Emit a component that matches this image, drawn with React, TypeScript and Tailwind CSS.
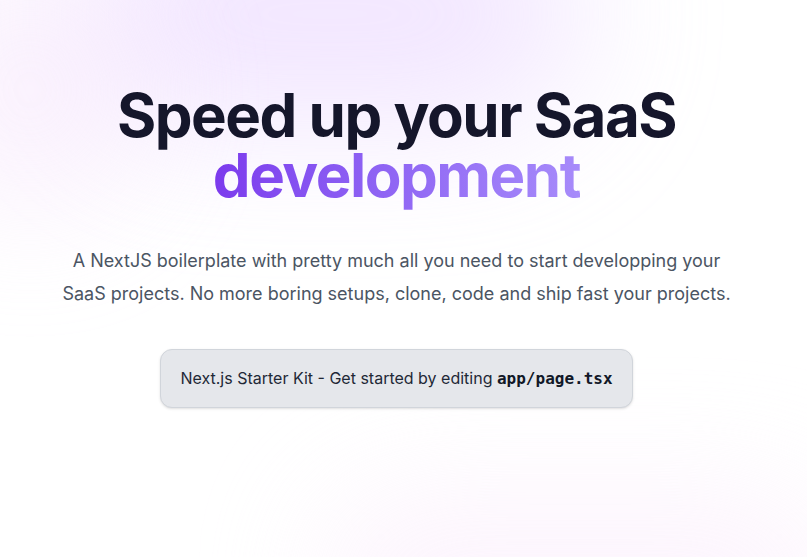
export default function App() {
  return (
    <div className="relative min-h-[557px] w-full overflow-hidden bg-white font-['Inter','Liberation_Sans',sans-serif]">
      {/* soft background glows */}
      <div className="pointer-events-none absolute -top-24 left-[80px] h-[220px] w-[500px] rounded-full bg-[#e9d5ff] opacity-60 blur-[70px]" />
      <div className="pointer-events-none absolute -top-10 left-[-90px] h-[260px] w-[240px] rounded-full bg-[#f5e1fb] opacity-40 blur-[60px]" />
      <div className="pointer-events-none absolute -bottom-28 left-[320px] h-[180px] w-[520px] rounded-full bg-[#fbeefc] opacity-60 blur-[60px]" />

      <main className="relative flex flex-col items-center pl-6 pr-[38px] pt-[85px] text-center">
        <h1 className="text-6xl leading-none font-bold tracking-tight text-[#15162b]">
          Speed up your SaaS
          <br />
          <span className="bg-gradient-to-r from-[#7c3aed] to-[#a78bfa] bg-clip-text text-transparent">
            development
          </span>
        </h1>

        <p className="mt-[39px] max-w-[680px] text-lg leading-[33px] text-[#4b5563]">
          A NextJS boilerplate with pretty much all you need to start
          developping your SaaS projects. No more boring setups, clone, code
          and ship fast your projects.
        </p>

        <div className="mt-[39px] rounded-xl border border-[#d1d5db] bg-[#e5e7eb] px-[19px] py-[16px] text-base text-[#1f2937] shadow-sm">
          Next.js Starter Kit - Get started by editing{" "}
          <code className="font-['DejaVu_Sans_Mono',monospace] font-bold text-[#111827]">
            app/page.tsx
          </code>
        </div>
      </main>
    </div>
  );
}
